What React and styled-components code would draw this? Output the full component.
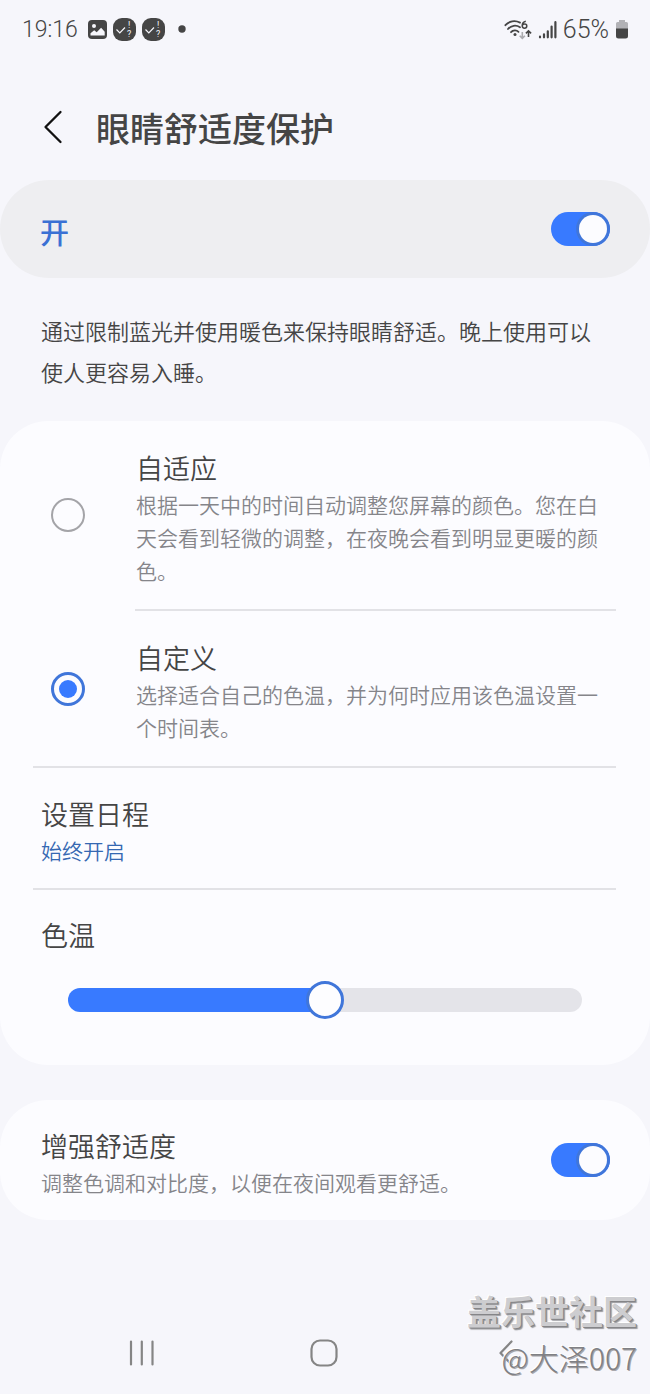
import React, { useState } from "react";
import styled, { createGlobalStyle } from "styled-components";

const GlobalStyle = createGlobalStyle`
  *, *::before, *::after { box-sizing: border-box; }
  body {
    margin: 0;
    background: #f6f6fb;
    color: #454545;
    font-family: Roboto, "Noto Sans CJK SC", sans-serif;
  }
  button, input { font: inherit; margin: 0; }
  h1, p { margin: 0; }
`;

const Page = styled.div`
  position: relative;
  display: flex;
  flex-direction: column;
  min-height: 100vh;
  font-family: "Noto Sans CJK SC", sans-serif;
`;

const StatusBar = styled.div`
  display: flex;
  justify-content: space-between;
  align-items: center;
  height: 58px;
  padding: 0 21px 0 22px;
  font-family: Roboto, sans-serif;
`;

const StatusGroup = styled.div`
  display: flex;
  align-items: center;
  gap: 6px;
`;

const Clock = styled.span`
  margin-right: 4px;
  font-size: 23px;
  font-weight: 300;
`;

const Percent = styled.span`
  font-size: 25px;
  font-weight: 300;
`;

const Header = styled.header`
  display: flex;
  align-items: center;
  gap: 28px;
  height: 122px;
  padding: 18px 38px 0;
`;

const IconButton = styled.button`
  display: flex;
  align-items: center;
  justify-content: center;
  width: ${(p) => p.$size}px;
  height: ${(p) => p.$size}px;
  padding: 0;
  border: 0;
  background: none;
`;

const Title = styled.h1`
  font-size: 34px;
  font-weight: 500;
  line-height: 44px;
`;

const MasterCard = styled.label`
  display: flex;
  align-items: center;
  justify-content: space-between;
  min-height: 98px;
  padding: 0 40px;
  border-radius: 49px;
  background: #eeeef1;
`;

const MasterState = styled.span`
  padding-top: 4px;
  color: #3a70d4;
  font-size: 29px;
  font-weight: 500;
`;

const Intro = styled.p`
  padding: 32px 41px 29px;
  font-size: 22px;
  font-weight: 350;
  line-height: 41px;
`;

const Card = styled.section`
  border-radius: 48px;
  background: #fcfcff;
`;

const OptionRow = styled.label`
  display: flex;
  align-items: center;
  gap: 51px;
  padding: 0 40px 0 51px;
`;

const SettingRow = styled.label`
  display: flex;
  align-items: center;
  padding: 0 40px 0 41px;
`;

const LinkRow = styled.a`
  display: block;
  padding: 0 40px 0 41px;
  color: inherit;
  text-decoration: none;
`;

const TextBlock = styled.span`
  display: block;
  flex: 1;
  padding: ${(p) => (p.$roomy ? "27px 0 22px" : "26px 0 21px")};
`;

const ItemTitle = styled.span`
  display: block;
  font-size: 27px;
  font-weight: 350;
  line-height: 40px;
`;

const ItemText = styled.span`
  display: block;
  color: ${(p) => (p.$accent ? "#3568b2" : "#85858a")};
  font-size: 21px;
  font-weight: 350;
  line-height: 33px;
`;

const Divider = styled.hr`
  height: 2px;
  margin: 0 34px 0 ${(p) => p.$inset}px;
  border: 0;
  background: #e2e2e6;
`;

const Radio = styled.input`
  appearance: none;
  display: grid;
  place-items: center;
  flex: none;
  width: 34px;
  height: 34px;
  border: 2px solid #a4a4a8;
  border-radius: 50%;
  &:checked { border: 3px solid #4076da; }
  &:checked::before {
    content: "";
    width: 18px;
    height: 18px;
    border-radius: 50%;
    background: #387aff;
  }
`;

const Switch = styled.input`
  appearance: none;
  display: flex;
  align-items: center;
  flex: none;
  width: 59px;
  height: 34px;
  padding: 3px;
  border-radius: 17px;
  background: #c9c9ce;
  &::before {
    content: "";
    width: 28px;
    height: 28px;
    border-radius: 50%;
    background: #fcfcff;
  }
  &:checked {
    justify-content: flex-end;
    background: #387aff;
  }
  &:checked::before { box-shadow: 0 0 0 3px #4076da; }
`;

const SliderBlock = styled.div`
  padding: 25px 68px 46px;
`;

const SliderLabel = styled.label`
  display: block;
  margin: 0 0 26px -27px;
  font-size: 27px;
  font-weight: 350;
  line-height: 40px;
`;

const Slider = styled.input`
  appearance: none;
  display: block;
  width: 100%;
  height: 38px;
  background: none;
  &::-webkit-slider-runnable-track {
    height: 24px;
    border-radius: 12px;
    background: linear-gradient(to right, #387aff var(--filled), #e4e4e9 var(--filled));
  }
  &::-webkit-slider-thumb {
    appearance: none;
    width: 38px;
    height: 38px;
    margin-top: -7px;
    border: 3px solid #4076da;
    border-radius: 50%;
    background: #fdfdff;
  }
`;

const ComfortCard = styled(Card)`
  margin-top: 35px;
`;

const NavBar = styled.nav`
  display: grid;
  grid-template-columns: repeat(3, 1fr);
  justify-items: center;
  margin-top: auto;
  padding: 0 53px 21px 51px;
`;

const Watermark = styled.div`
  position: absolute;
  right: 13px;
  bottom: 14px;
  text-align: right;
  pointer-events: none;
`;

const WatermarkName = styled.div`
  color: #cdcdd0;
  font-size: 34px;
  font-weight: 700;
  line-height: 46px;
  text-shadow: 1px 1px 0 #858588, 2px 2px 1px #9a9a9d, -1px -1px 0 #ffffff;
`;

const WatermarkUser = styled.div`
  color: #808084;
  font-size: 30px;
  font-weight: 300;
  line-height: 46px;
  text-shadow: 1px 1px 0 #a8a8ab, -1px -1px 0 #ffffff;
`;

const PictureIcon = () => (
  <svg width="19" height="19" viewBox="0 0 19 19" aria-hidden="true">
    <rect width="19" height="19" rx="4" fill="#454545" />
    <circle cx="6" cy="6" r="2" fill="#f6f6fb" />
    <path d="M2.5 15.5v-2.2l3.7-3.1 2.5 2.1 4.4-4.5 3.6 3.9v3.8z" fill="#f6f6fb" />
  </svg>
);

const CheckBadge = () => (
  <svg width="23" height="23" viewBox="0 0 23 23" aria-hidden="true">
    <rect width="23" height="23" rx="9" fill="#454545" />
    <path d="M3.5 11.5l3.3 3.5 5.2-5.5" fill="none" stroke="#f6f6fb" strokeWidth="1.2" />
    <text x="15" y="10" fill="#f6f6fb" fontSize="9">!</text>
    <text x="14" y="18.5" fill="#f6f6fb" fontSize="9">?</text>
  </svg>
);

const DotIcon = () => (
  <svg width="15" height="8" viewBox="0 0 15 8" aria-hidden="true">
    <circle cx="11" cy="4" r="3.7" fill="#454545" />
  </svg>
);

const WifiIcon = () => (
  <svg width="28" height="21" viewBox="0 0 28 21" fill="none" aria-hidden="true">
    <g stroke="#454545" strokeWidth="1.8" strokeLinecap="round">
      <path d="M1.4 6.2C5 2 11 1 16 3.6" />
      <path d="M4 10C7 6.4 12 5.7 16 8.2" />
      <path d="M7 13.2c2-2.2 5.4-2.4 7.5-.4" />
    </g>
    <circle cx="11" cy="15.5" r="1.5" fill="#454545" />
    <path d="M21.8 2.3c-2 .4-3.6 2-3.6 4.3 0 1.600.9 2.700 2.300 2.700s2.300-1 2.300-2.200-.8-2-2.100-2c-1 0-2 .5-2.400 1.400" stroke="#454545" strokeWidth="1.5" />
    <path d="M18.3 13v6.2M15.7 16.8l2.6 2.6 2.6-2.6" stroke="#ababaf" strokeWidth="1.6" />
    <path d="M24.5 18v-6.2M21.9 14.4l2.6-2.6 2.6 2.6" stroke="#454545" strokeWidth="1.6" />
  </svg>
);

const SignalIcon = () => (
  <svg width="19" height="19" viewBox="0 0 19 19" aria-hidden="true">
    <path d="M2 17.3v-.6M6 17.3v-3M9.8 17.3v-6M13.6 17.3V6.5M17.4 17.3V2.2" stroke="#454545" strokeWidth="2.2" strokeLinecap="round" />
  </svg>
);

const BatteryIcon = () => (
  <svg width="14" height="19" viewBox="0 0 14 19" aria-hidden="true">
    <path d="M4 0h6v2h1.5A1.5 1.5 0 0 1 13 3.5V9H1V3.5A1.5 1.5 0 0 1 2.5 2H4z" fill="#b2b2b6" />
    <path d="M1 8.5h12V16a2.5 2.5 0 0 1-2.5 2.5h-7A2.5 2.5 0 0 1 1 16z" fill="#454545" />
  </svg>
);

const BackIcon = () => (
  <svg width="30" height="36" viewBox="0 0 30 36" fill="none" aria-hidden="true">
    <path d="M22.5 2L7.5 17l15 15" stroke="#111" strokeWidth="2.3" strokeLinecap="round" strokeLinejoin="round" />
  </svg>
);

const RecentsIcon = () => (
  <svg width="26" height="28" viewBox="0 0 26 28" fill="none" aria-hidden="true">
    <path d="M2 2.5v23M12.8 2.5v23M23.5 2.5v23" stroke="#858585" strokeWidth="2.2" strokeLinecap="round" />
  </svg>
);

const HomeIcon = () => (
  <svg width="28" height="28" viewBox="0 0 28 28" fill="none" aria-hidden="true">
    <rect x="1.5" y="1.5" width="25" height="25" rx="8.5" stroke="#858585" strokeWidth="2.2" />
  </svg>
);

const NavBackIcon = () => (
  <svg width="16" height="28" viewBox="0 0 16 28" fill="none" aria-hidden="true">
    <path d="M13.5 2.5L2.5 14l11 11.5" stroke="#858585" strokeWidth="2.2" strokeLinecap="round" strokeLinejoin="round" />
  </svg>
);

export default function App() {
  const [enabled, setEnabled] = useState(true);
  const [mode, setMode] = useState("custom");
  const [temperature, setTemperature] = useState(50);
  const [enhanced, setEnhanced] = useState(true);

  return (
    <Page>
      <GlobalStyle />
      <StatusBar>
        <StatusGroup>
          <Clock>19:16</Clock>
          <PictureIcon />
          <CheckBadge />
          <CheckBadge />
          <DotIcon />
        </StatusGroup>
        <StatusGroup>
          <WifiIcon />
          <SignalIcon />
          <Percent>65%</Percent>
          <BatteryIcon />
        </StatusGroup>
      </StatusBar>

      <Header>
        <IconButton $size={30} type="button" aria-label="返回">
          <BackIcon />
        </IconButton>
        <Title>眼睛舒适度保护</Title>
      </Header>

      <MasterCard>
        <MasterState>开</MasterState>
        <Switch type="checkbox" role="switch" checked={enabled} onChange={(e) => setEnabled(e.target.checked)} />
      </MasterCard>

      <Intro>通过限制蓝光并使用暖色来保持眼睛舒适。晚上使用可以使人更容易入睡。</Intro>

      <Card>
        <OptionRow>
          <Radio type="radio" name="mode" checked={mode === "adaptive"} onChange={() => setMode("adaptive")} />
          <TextBlock $roomy>
            <ItemTitle>自适应</ItemTitle>
            <ItemText>根据一天中的时间自动调整您屏幕的颜色。您在白天会看到轻微的调整，在夜晚会看到明显更暖的颜色。</ItemText>
          </TextBlock>
        </OptionRow>
        <Divider $inset={135} />
        <OptionRow>
          <Radio type="radio" name="mode" checked={mode === "custom"} onChange={() => setMode("custom")} />
          <TextBlock $roomy>
            <ItemTitle>自定义</ItemTitle>
            <ItemText>选择适合自己的色温，并为何时应用该色温设置一个时间表。</ItemText>
          </TextBlock>
        </OptionRow>
        <Divider $inset={33} />
        <LinkRow href="#schedule">
          <TextBlock>
            <ItemTitle>设置日程</ItemTitle>
            <ItemText $accent>始终开启</ItemText>
          </TextBlock>
        </LinkRow>
        <Divider $inset={33} />
        <SliderBlock>
          <SliderLabel htmlFor="temperature">色温</SliderLabel>
          <Slider
            id="temperature"
            type="range"
            min="0"
            max="100"
            value={temperature}
            onChange={(e) => setTemperature(Number(e.target.value))}
            style={{ "--filled": `${temperature}%` }}
          />
        </SliderBlock>
      </Card>

      <ComfortCard>
        <SettingRow>
          <TextBlock>
            <ItemTitle>增强舒适度</ItemTitle>
            <ItemText>调整色调和对比度，以便在夜间观看更舒适。</ItemText>
          </TextBlock>
          <Switch type="checkbox" role="switch" checked={enhanced} onChange={(e) => setEnhanced(e.target.checked)} />
        </SettingRow>
      </ComfortCard>

      <NavBar>
        <IconButton $size={40} type="button" aria-label="最近"><RecentsIcon /></IconButton>
        <IconButton $size={40} type="button" aria-label="主页"><HomeIcon /></IconButton>
        <IconButton $size={40} type="button" aria-label="返回"><NavBackIcon /></IconButton>
      </NavBar>

      <Watermark>
        <WatermarkName>盖乐世社区</WatermarkName>
        <WatermarkUser>@大泽007</WatermarkUser>
      </Watermark>
    </Page>
  );
}
